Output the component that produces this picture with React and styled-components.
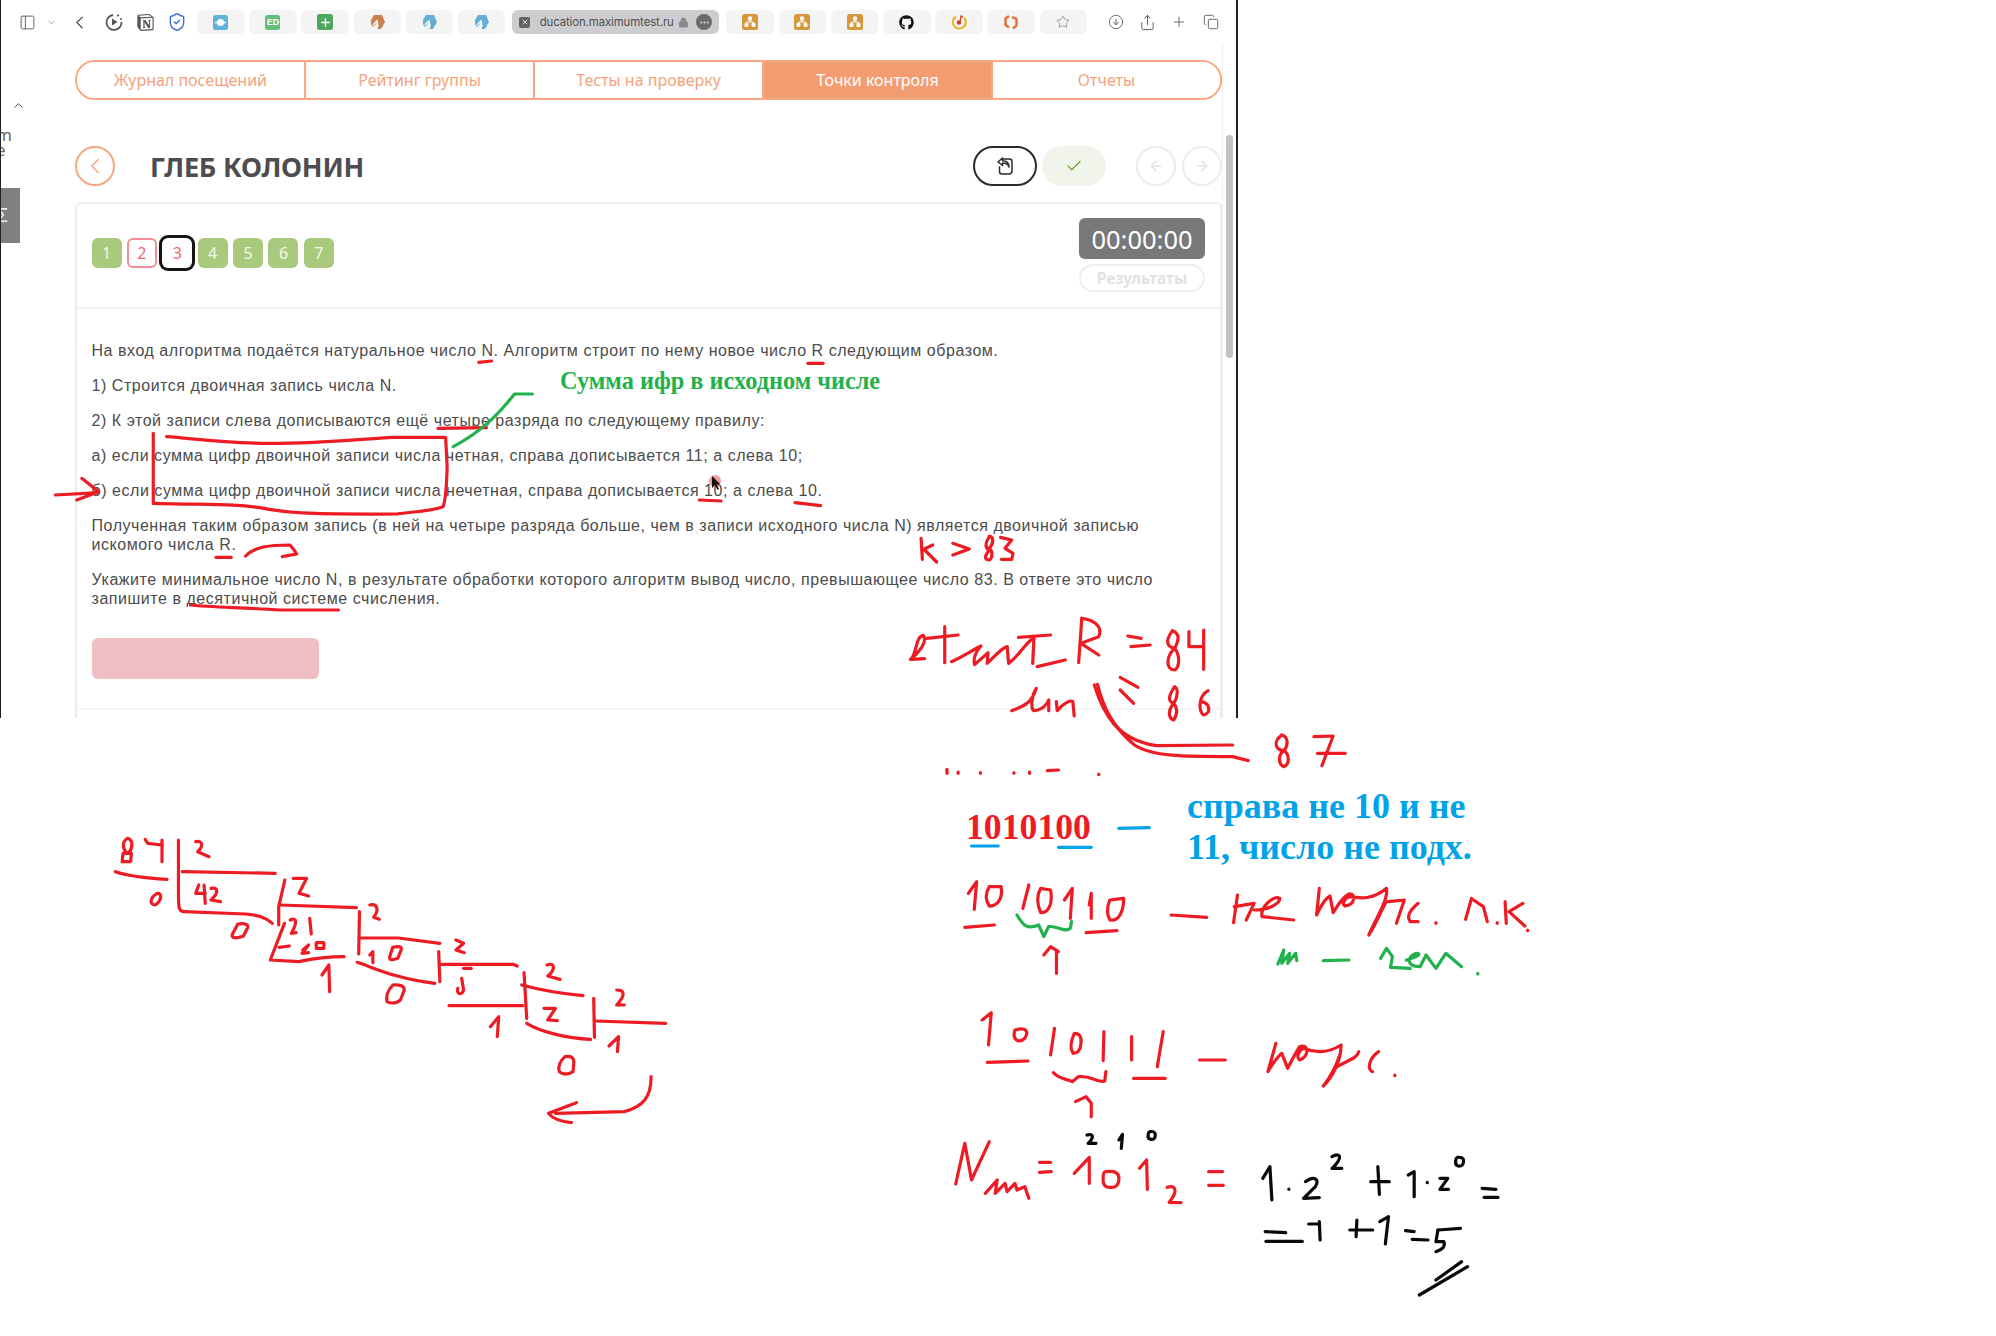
import React from "react";
import styled, { createGlobalStyle } from "styled-components";
import { PanelLeft, ChevronDown, ChevronLeft, ChevronUp, ShieldCheck, Lock, Ellipsis, X, Star, CircleArrowDown, Share, Plus, Copy, ArrowLeft, ArrowRight, Check } from "lucide-react";
import { FaGithub } from "react-icons/fa";
import { SiNotion } from "react-icons/si";

const Global = createGlobalStyle`
  html, body { margin: 0; padding: 0; background: #fff; }
  body { font-family: "Liberation Sans", Arial, sans-serif; }
  * { box-sizing: border-box; }
`;

const Page = styled.div`
  position: relative;
  width: 1996px;
  height: 1336px;
  background: #fff;
  overflow: hidden;
`;
const Win = styled.div`
  width: 1238px;
  height: 718px;
  border-left: 1px solid #222;
  border-right: 2px solid #222;
  display: flex;
  flex-direction: column;
  overflow: hidden;
  background: #fff;
`;
const Toolbar = styled.div`
  height: 45px;
  flex: none;
  display: flex;
  align-items: flex-start;
  padding: 10px 0 0 13px;
`;
const Slot = styled.span`
  width: ${(p) => p.$w}px;
  height: 24px;
  flex: none;
  display: flex;
  align-items: center;
  justify-content: center;
  color: ${(p) => p.$c || "#666"};
`;
const TabGroup = styled.div`
  display: flex;
  gap: 4.7px;
  margin-left: ${(p) => p.$ml || 0}px;
`;
const MiniTab = styled.div`
  width: 47.5px;
  height: 24px;
  border-radius: 6px;
  background: #f4f4f5;
  display: flex;
  align-items: center;
  justify-content: center;
`;
const Address = styled.div`
  width: 207px;
  height: 24px;
  margin-left: 7px;
  border-radius: 6px;
  background: #cdcdcf;
  display: flex;
  align-items: center;
  padding: 0 7px 0 7px;
  font-family: Inter, sans-serif;
  font-size: 11.4px;
  letter-spacing: -0.1px;
  color: #4e4e50;
  white-space: nowrap;
`;
const CloseBox = styled.span`
  width: 11px;
  height: 11px;
  border-radius: 2px;
  background: #636365;
  color: #ddd;
  display: flex;
  align-items: center;
  justify-content: center;
  margin-right: 6px;
`;
const FaintE = styled.span`
  color: #bdbdbf;
`;
const MoreDot = styled.span`
  width: 16px;
  height: 16px;
  border-radius: 50%;
  background: #6b6b6d;
  color: #ddd;
  display: flex;
  align-items: center;
  justify-content: center;
  margin-left: auto;
`;
const RightIcons = styled.div`
  display: flex;
  margin-left: 13px;
`;

const Fav = styled.span`
  width: ${(p) => p.$s || 15}px;
  height: ${(p) => p.$s || 15}px;
  background: ${(p) => p.$bg};
  border-radius: 2.5px;
  color: #fff;
  display: flex;
  align-items: center;
  justify-content: center;
  font: 700 9px "Liberation Sans", sans-serif;
`;

const Body = styled.div`
  flex: 1;
  display: flex;
  min-height: 0;
`;
const Rail = styled.div`
  width: 74px;
  flex: none;
  display: flex;
  flex-direction: column;
  overflow: hidden;
  color: #555;
`;
const RailChevron = styled.span`
  margin: 53px 0 0 10px;
  height: 14px;
  display: flex;
`;
const RailText = styled.div`
  margin: 15px 0 0 -5px;
  font: 400 17px/15px "Noto Sans", sans-serif;
  color: #666;
`;
const RailBlock = styled.div`
  margin-top: 31px;
  width: 19px;
  height: 55px;
  background: #808080;
  color: #eee;
  font: 400 19px/55px "Noto Sans", sans-serif;
  overflow: hidden;
  padding-left: 0;
  text-indent: -4px;
`;
const Main = styled.main`
  width: 1147px;
  flex: none;
  padding-top: 15px;
`;
const Nav = styled.nav`
  display: flex;
  height: 40px;
  border: 2px solid #f5a882;
  border-radius: 20px;
  overflow: hidden;
`;
const NavTab = styled.div`
  flex: 1;
  display: flex;
  align-items: center;
  justify-content: center;
  font: 400 16px "Noto Sans", sans-serif;
  color: ${(p) => (p.$active ? "#fff" : "#f4a27c")};
  background: ${(p) => (p.$active ? "#f39c72" : "#fff")};
  border-left: ${(p) => (p.$first ? "none" : "2px solid #f5a882")};
`;
const TitleRow = styled.div`
  margin-top: 46px;
  height: 40px;
  display: flex;
  align-items: center;
`;
const Back = styled.div`
  width: 40px;
  height: 40px;
  border-radius: 50%;
  border: 2px solid #f5a882;
  color: #f4a27c;
  display: flex;
  align-items: center;
  justify-content: center;
`;
const Name = styled.h1`
  margin: 0 0 0 35px;
  font: 700 27px "Noto Sans", sans-serif;
  letter-spacing: -0.2px;
  color: #4d4d4f;
`;
const Actions = styled.div`
  margin-left: auto;
  display: flex;
  align-items: center;
`;
const Pill = styled.div`
  width: 64px;
  height: 40px;
  border-radius: 20px;
  display: flex;
  align-items: center;
  justify-content: center;
  margin-left: ${(p) => p.$ml || 0}px;
  border: ${(p) => (p.$dark ? "2px solid #2b2b2b" : "none")};
  background: ${(p) => (p.$dark ? "#fff" : "#f1f4ea")};
  color: ${(p) => (p.$dark ? "#2b2b2b" : "#7aa23c")};
`;
const Circle = styled.div`
  width: 40px;
  height: 40px;
  border-radius: 50%;
  border: 2px solid #ececec;
  color: #e2e2e2;
  display: flex;
  align-items: center;
  justify-content: center;
  margin-left: ${(p) => p.$ml}px;
`;
const Card = styled.section`
  margin-top: 16px;
  border: 2px solid #ececec;
  border-bottom: none;
  border-radius: 6px 6px 0 0;
  height: 520px;
`;
const CardHead = styled.div`
  height: 105px;
  border-bottom: 2px solid #f3f3f3;
  display: flex;
  justify-content: space-between;
  padding: 14px 15px 0 14.5px;
`;
const Steps = styled.div`
  display: flex;
  gap: 5.4px;
  margin-top: 20px;
`;
const Step = styled.div`
  width: 30px;
  height: 30px;
  border-radius: 6px;
  display: flex;
  align-items: center;
  justify-content: center;
  font: 400 16px "Noto Sans", sans-serif;
  background: ${(p) => (p.$state === "ok" ? "#a9ca7c" : "#fff")};
  color: ${(p) => (p.$state === "ok" ? "#f2f7e8" : "#ef6672")};
  border: ${(p) => (p.$state === "bad" ? "2px solid #f08d96" : "none")};
  box-shadow: ${(p) => (p.$state === "cur" ? "0 0 0 3px #151515" : "none")};
`;
const TimerCol = styled.div`
  width: 126px;
  display: flex;
  flex-direction: column;
  gap: 5px;
`;
const Timer = styled.div`
  height: 41px;
  border-radius: 6px;
  background: #78787a;
  color: #fff;
  display: flex;
  align-items: center;
  justify-content: center;
  font: 400 25.5px "Noto Sans", sans-serif;
`;
const Results = styled.div`
  height: 28px;
  border-radius: 14px;
  border: 2px solid #eeeeee;
  color: #e2e2e2;
  display: flex;
  align-items: center;
  justify-content: center;
  font: 700 15.5px "Noto Sans", sans-serif;
`;
const Task = styled.div`
  padding: 31.5px 14.5px 0;
  font: 400 16px/19px "Liberation Sans", sans-serif;
  letter-spacing: 0.54px;
  color: #4c4c4c;
`;
const Para = styled.p`
  margin: 0 0 16px;
  white-space: nowrap;
`;
const Answer = styled.div`
  margin-top: 30px;
  width: 227px;
  height: 41px;
  border-radius: 6px;
  background: #efbfc3;
`;
const CardFoot = styled.div`
  margin: 29px -14.5px 0;
  border-top: 2px solid #f5f5f5;
`;
const Scroll = styled.div`
  width: 14px;
  flex: none;
  border-left: 1px solid #eeeeee;
  padding: 90px 2px 0 3px;
`;
const Thumb = styled.div`
  width: 7px;
  height: 223px;
  border-radius: 4px;
  background: #c2c2c2;
`;
const Overlay = styled.svg`
  position: absolute;
  left: 0;
  top: 0;
  width: 1996px;
  height: 1336px;
  pointer-events: none;
  path, circle {
    vector-effect: non-scaling-stroke;
  }
`;
const Note = styled.div`
  position: absolute;
  left: ${(p) => p.$x}px;
  top: ${(p) => p.$y}px;
  font-family: "Liberation Serif", "Times New Roman", serif;
  font-weight: 700;
  font-size: ${(p) => p.$size}px;
  line-height: ${(p) => p.$lh}px;
  color: ${(p) => p.$color};
  white-space: nowrap;
`;

const RED = "#ed1c24", GREEN = "#22b14c", BLUE = "#00a2e8", BLACK = "#0a0a0a";

function Ink({ ox, oy, sx, color, w = 3.2, d }) {
  return (
    <g transform={`translate(${ox} ${oy}) scale(${1 / sx} ${1 / 3})`} fill="none" stroke={color} strokeWidth={w} strokeLinecap="round" strokeLinejoin="round">
      {d.map((p, i) => <path key={i} d={p} />)}
    </g>
  );
}

const Z3 = { ox: 40, oy: 200, sx: 1.96 };
const Z4 = { ox: 40, oy: 500, sx: 1.742 };
const Z5 = { ox: 880, oy: 500, sx: 2.24 };
const Z6 = { ox: 100, oy: 810, sx: 2.613 };
const Z7 = { ox: 930, oy: 870, sx: 2.53 };
const Z8 = { ox: 930, oy: 1100, sx: 2.53 };

const inkZ3 = [
  "M860,487 L885,483", "M1505,490 L1535,490", "M780,685 L875,683",
  "M222,700 L222,905",
  "M248,710 C300,715 350,730 450,730 C550,730 650,715 690,712 L795,712 L798,800 C797,860 795,900 790,920 C760,935 730,935 700,942 C600,942 500,945 440,925 C380,910 330,915 222,910",
  "M30,885 L115,878", "M82,835 L115,875 L72,900",
  "M1292,900 L1335,903", "M1480,908 L1530,917", "M345,1072 L375,1072",
  "M403,1068 C420,1040 450,1035 490,1035 L498,1050 L503,1062 L475,1070",
];
const inkZ5 = [
  "M92,115 L95,178", "M118,135 L95,150", "M100,150 L127,186", "M163,130 L200,147 L163,165",
  "M245,110 C235,130 235,145 245,150 C235,165 232,180 245,180 C255,170 250,150 245,145 C255,130 255,110 245,108",
  "M270,112 L295,120 L280,145 L298,160 L295,178 L272,178",
  "M68,478 C85,462 108,425 97,406 C80,410 84,450 70,478 L100,476",
  "M145,380 L145,488", "M105,415 L175,405",
  "M160,485 C185,470 205,452 226,438 C215,455 208,475 212,494 L242,458 L240,490 C258,470 270,445 285,440 L288,490 C310,470 325,430 345,412 L342,490", "M310,412 L382,405",
  "M352,500 L415,480",
  "M452,355 L445,488", "M452,355 C480,360 500,380 490,410 L450,430 L490,465",
  "M555,408 L585,415", "M562,440 L605,435",
  "M655,392 C640,420 640,440 660,445 C640,470 640,510 660,510 C672,500 672,465 660,445 C670,420 672,400 655,392",
  "M692,395 L692,440 L725,440", "M725,390 L725,508",
  "M295,632 C320,620 340,610 350,565 C338,590 338,630 345,632 C365,630 375,610 378,600 L378,632 M395,605 L397,632 C410,610 425,600 432,605 L435,648",
  "M480,555 C500,640 530,720 620,737 L790,735",
  "M487,553 C500,620 520,680 570,735 C610,770 680,770 790,770 L825,782",
  "M538,532 L578,562", "M538,570 L568,610",
  "M660,560 C645,590 645,605 658,610 C645,630 645,655 658,660 C668,640 665,620 658,610 C668,590 668,565 660,560",
  "M735,572 C710,590 715,640 725,645 C742,640 740,610 720,605",
  "M900,705 C880,725 885,750 905,752 C915,735 915,710 900,705", "M905,752 C890,765 893,795 905,800 C920,790 915,760 905,752",
  "M972,710 L1015,708 L990,797", "M980,760 L1042,760",
  "M150,808 L150,820", "M175,816 L175,820", "M225,818 L225,820", "M300,818 L300,820", "M335,816 L335,820", "M375,812 L400,810", "M490,822 L490,824",
];
const inkZ6 = [
  "M72,85 C55,95 60,125 75,130 C85,115 88,90 72,85", "M75,130 L60,130 L58,155 L80,155 L82,130",
  "M118,88 L125,100 L162,105", "M162,90 L162,155",
  "M205,90 L205,245", "M40,185 C80,200 130,205 175,208", "M215,185 L458,190",
  "M250,95 C270,90 270,110 255,125 L285,140",
  "M258,225 L250,250 L275,250", "M272,225 L275,280", "M290,235 C310,230 310,250 290,270 L315,275",
  "M150,250 C130,262 128,285 145,285 C162,270 162,248 150,250",
  "M205,250 C205,290 205,305 220,305 L380,312 C410,315 430,320 450,340",
  "M360,342 Q388,338 386,352 L375,378 Q345,390 345,375 Z",
  "M483,210 L467,290 L467,345", "M470,285 L670,293",
  "M505,205 L540,205 L520,250 L545,258",
  "M497,330 C515,320 515,340 500,370 L512,368", "M548,325 L552,372",
  "M482,340 L445,450 L520,455 C560,445 600,440 638,440", "M468,412 L495,408",
  "M530,420 L545,405 L528,430 L545,428", "M565,398 L585,398 L585,415 L565,415 Z",
  "M580,495 L598,465 L600,545",
  "M678,305 L676,432", "M680,384 L780,384 L888,400", "M705,285 C725,280 730,300 715,322 L730,328",
  "M705,435 L713,425 L713,458", "M765,412 Q790,405 787,420 L778,445 Q755,455 757,440 Z",
  "M672,457 C720,475 770,505 875,520", "M765,525 Q795,522 795,540 L785,570 Q770,585 750,575 Q745,550 765,525 Z",
  "M885,425 L888,515", "M890,463 L1080,463 L1090,468", "M930,390 L950,400 L930,420 L952,428",
  "M950,475 L970,475", "M945,505 L950,540 C945,560 930,550 935,535",
  "M912,587 L1105,587", "M1020,650 L1042,620 L1038,680",
  "M1108,488 L1115,625", "M1102,525 C1150,540 1200,550 1262,557", "M1168,465 C1190,455 1190,480 1170,498 L1202,508",
  "M1160,595 L1190,595 L1170,630 L1195,632",
  "M1115,640 C1150,665 1220,685 1282,688",
  "M1290,565 L1292,682", "M1295,633 L1478,640", "M1350,540 C1375,540 1370,560 1350,585 L1370,585",
  "M1330,708 L1355,680 L1352,725", "M1215,740 Q1240,735 1238,760 L1236,785 Q1215,800 1200,785 Q1195,760 1215,740 Z",
  "M1440,800 C1440,860 1420,890 1370,905 L1190,910", "M1245,878 L1172,910 C1185,930 1210,935 1232,938",
];
const inkZ7 = [
  "M97,70 L118,35 L112,118", "M150,50 L180,50 C185,85 170,110 150,108 C140,90 140,70 150,50 Z", "M88,172 L163,165",
  "M235,115 L250,45", "M280,55 L305,60 C310,90 305,130 280,128 C270,100 270,75 280,55 Z", "M340,90 L360,55 L355,145",
  "M403,105 L408,70 L408,145", "M455,90 L490,85 C490,120 480,155 455,150 C445,130 450,105 455,90 Z", "M395,188 L473,182",
  "M288,255 L305,230 L325,245", "M320,245 L320,310",
  "M610,135 L700,142",
  "M778,75 L768,158", "M770,110 L820,100 L800,150", "M820,120 C860,120 885,100 885,85 C870,75 835,110 840,140 L920,150",
  "M985,55 L978,135 C990,105 1000,85 1012,78 L1020,128 C1030,110 1040,85 1060,72 C1080,70 1075,105 1050,108 C1040,100 1050,85 1060,80 C1090,85 1120,90 1155,55 C1160,90 1130,140 1110,195 C1130,160 1145,110 1155,95",
  "M1160,95 L1200,90 L1180,160", "M1235,100 C1215,120 1205,140 1215,155 L1235,155",
  "M1280,158 L1280,160",
  "M1370,85 L1355,148", "M1375,90 L1400,110 L1410,155", "M1435,158 L1435,160", "M1455,95 L1458,160", "M1500,100 L1465,125 L1505,168", "M1512,180 L1512,182",
  "M132,450 L155,428 L148,525", "M215,480 Q245,470 245,490 Q240,515 222,512 Q208,505 215,480 Z", "M145,577 L248,573",
  "M315,475 L305,555", "M365,490 Q385,490 382,520 Q380,550 362,550 Q350,530 365,490 Z", "M440,485 L438,572", "M510,500 L510,570", "M590,485 L575,590", "M515,625 L595,625",
  "M312,608 C330,630 345,625 360,635 L375,620 C410,615 420,640 442,633 L445,605",
  "M368,695 L395,680 L408,700 L408,740",
  "M682,570 L747,570",
  "M875,520 L855,605 C870,575 885,555 890,550 L905,595 C915,570 925,550 935,530 C960,520 960,560 935,570 C925,560 935,540 945,535 C985,555 1020,540 1040,525 C1040,570 1020,620 995,648 C1015,620 1030,580 1035,560",
  "M1030,590 C1060,570 1080,565 1085,545", "M1135,545 C1110,565 1105,600 1120,605", "M1176,615 L1176,617",
];
const inkZ7Green = [
  "M220,135 C235,165 245,180 275,165 L288,200 L300,170 C320,165 340,190 355,175 L358,155",
  "M880,282 L895,240 L890,280 L910,250 L905,280 L925,250 L928,272", "M995,272 L1060,270",
  "M1140,265 L1155,235 L1170,260 L1165,292 L1215,295", "M1205,270 C1235,260 1245,250 1230,250 C1205,260 1205,290 1240,290 L1255,255 L1280,295 L1305,250 L1345,290",
  "M1386,310 L1386,312",
];
const inkZ8Red = [
  "M65,252 L88,130 L105,240 L150,125",
  "M140,280 L170,240 L165,280 L190,250 L195,275 L215,250 L220,270 L240,260 L250,295",
  "M277,187 L305,187", "M277,217 L307,215",
  "M365,220 L403,172 L403,250", "M445,215 Q478,210 478,235 Q478,265 455,262 Q436,262 438,235 Q438,215 445,215 Z", "M530,205 L548,180 L550,268",
  "M600,262 C620,255 630,270 605,307 L635,308",
  "M705,215 L740,215", "M705,256 L742,256",
];
const inkZ8Black = [
  "M397,105 C415,100 415,112 400,130 L420,130", "M478,120 L487,103 L484,145", "M556,95 Q570,92 570,105 Q570,120 558,118 Q550,115 552,105 Q552,97 556,95 Z",
  "M842,235 L860,200 L865,300", "M908,267 L908,268", "M950,245 C975,225 985,240 975,260 L945,295 L985,293",
  "M1017,170 C1040,155 1045,175 1017,205 L1042,205",
  "M1133,200 L1137,283", "M1115,245 L1162,245",
  "M1210,225 L1225,215 L1225,290", "M1258,247 L1258,248", "M1290,235 L1310,235 L1290,268 L1312,268",
  "M1334,172 Q1350,170 1350,183 Q1350,200 1336,198 Q1328,195 1330,183 Q1330,175 1334,172 Z",
  "M1397,265 L1432,268", "M1402,292 L1437,292",
  "M848,395 L900,398", "M850,424 L942,424",
  "M958,372 L985,372", "M985,365 L987,420",
  "M1080,360 L1078,410", "M1062,390 L1120,390",
  "M1138,365 L1160,350 L1152,432",
  "M1203,392 L1225,395", "M1220,418 L1260,420",
  "M1285,390 L1342,385", "M1285,390 L1280,425 L1300,425 C1305,440 1295,450 1280,455",
  "M1238,585 L1360,500", "M1280,540 L1345,485",
];

const TreeIcon = () => (
  <Fav $bg="#d8973a" $s={16}>
    <svg width="12" height="12" viewBox="0 0 12 12" fill="#fff"><rect x="4" y="0.5" width="4" height="4" rx="1" /><rect x="0.5" y="7" width="4" height="4" rx="1" /><rect x="7.5" y="7" width="4" height="4" rx="1" /><path d="M6 4v2M2.5 7V6h7v1" stroke="#fff" fill="none" /></svg>
  </Fav>
);
const BirdIcon = ({ c }) => (
  <svg width="15" height="16" viewBox="0 0 15 16"><path d="M4 1 L12 1 L15 8 L11 15 L8 15 L7 9 L3 13 L1 10 L1 6 Z" fill={c} /><path d="M3 11 L7 7 L8 13" stroke="#fff" strokeWidth="1.4" fill="none" /></svg>
);
const PlayClock = () => (
  <svg width="20" height="20" viewBox="0 0 20 20" fill="none" stroke="#555" strokeWidth="1.8"><path d="M9 3 A7.5 7.5 0 1 0 17.5 10" /><circle cx="14" cy="3.5" r="1.1" fill="#555" stroke="none" /><circle cx="17" cy="7" r="1" fill="#555" stroke="none" /><path d="M8 6.5 L13.5 10 L8 13.5 Z" fill="#555" stroke="none" /></svg>
);
const UndoSquare = () => (
  <svg width="20" height="20" viewBox="0 0 20 20" fill="none" stroke="#2b2b2b" strokeWidth="1.5" strokeLinejoin="round" strokeLinecap="round"><path d="M7 3 H14.5 A2.5 2.5 0 0 1 17 5.5 V15 A3 3 0 0 1 14 18 H7 A2.5 2.5 0 0 1 4.5 15.5 V11" /><path d="M7.5 2 L3 6 L7.5 9.5 V7 C11 7 13 8 14 11 C14 7 12 4.7 7.5 4.7 Z" fill="#fff" /></svg>
);
const RecordIcon = () => (
  <svg width="16" height="16" viewBox="0 0 16 16" fill="none"><path d="M5 2.5 A6.5 6.5 0 1 0 13 3.5" stroke="#eab92e" strokeWidth="2.2" /><circle cx="8" cy="8.5" r="2.3" fill="#d9402c" /><path d="M9 8 L10 2 L12 3" stroke="#d9402c" strokeWidth="1.4" /></svg>
);
const HexIcon = () => (
  <svg width="14" height="16" viewBox="0 0 14 16" fill="none" stroke="#e0702b" strokeWidth="2.4"><path d="M5 2 L1.5 4.5 V11 L5 13.5" /><path d="M8 3 L12.5 5 V11.5 L9 14.5" /></svg>
);

const NAV = ["Журнал посещений", "Рейтинг группы", "Тесты на проверку", "Точки контроля", "Отчеты"];
const STEPS = ["ok", "bad", "cur", "ok", "ok", "ok", "ok"];

export default function App() {
  return (
    <Page>
      <Global />
      <Win>
        <Toolbar>
          <Slot $w={26}><PanelLeft size={17} strokeWidth={1.4} color="#666" /></Slot>
          <Slot $w={23}><ChevronDown size={11} color="#999" /></Slot>
          <Slot $w={32}><ChevronLeft size={21} strokeWidth={1.5} color="#555" /></Slot>
          <Slot $w={38}><PlayClock /></Slot>
          <Slot $w={24}><SiNotion size={17} color="#555" /></Slot>
          <Slot $w={40}><ShieldCheck size={20} strokeWidth={1.7} color="#3f6fe0" /></Slot>
          <TabGroup>
            <MiniTab><Fav $bg="#62b2d8"><svg width="11" height="9" viewBox="0 0 11 9" fill="#fff"><circle cx="5.5" cy="4.5" r="3.5" /><circle cx="1" cy="4.5" r="1" /><circle cx="10" cy="4.5" r="1" /></svg></Fav></MiniTab>
            <MiniTab><Fav $bg="#5fc07c">ED</Fav></MiniTab>
            <MiniTab><Fav $bg="#4ea75c" $s={16}><Plus size={13} strokeWidth={2.6} /></Fav></MiniTab>
            <MiniTab><BirdIcon c="#c98350" /></MiniTab>
            <MiniTab><BirdIcon c="#66aed6" /></MiniTab>
            <MiniTab><BirdIcon c="#66aed6" /></MiniTab>
          </TabGroup>
          <Address>
            <CloseBox><X size={8} strokeWidth={3} /></CloseBox>
            <FaintE>:</FaintE>ducation.maximumtest.ru
            <Lock size={11} fill="#8a8a8c" color="#8a8a8c" style={{ marginLeft: 4 }} />
            <MoreDot><Ellipsis size={11} strokeWidth={2.6} /></MoreDot>
          </Address>
          <TabGroup $ml={7}>
            <MiniTab><TreeIcon /></MiniTab>
            <MiniTab><TreeIcon /></MiniTab>
            <MiniTab><TreeIcon /></MiniTab>
            <MiniTab><FaGithub size={15} color="#111" /></MiniTab>
            <MiniTab><RecordIcon /></MiniTab>
            <MiniTab><HexIcon /></MiniTab>
            <MiniTab><Star size={14} strokeWidth={1.4} color="#888" /></MiniTab>
          </TabGroup>
          <RightIcons>
            <Slot $w={32}><CircleArrowDown size={16} strokeWidth={1.3} color="#555" /></Slot>
            <Slot $w={31}><Share size={17} strokeWidth={1.3} color="#555" /></Slot>
            <Slot $w={32}><Plus size={16} strokeWidth={1.3} color="#555" /></Slot>
            <Slot $w={32}><Copy size={16} strokeWidth={1.3} color="#555" /></Slot>
          </RightIcons>
        </Toolbar>
        <Body>
          <Rail>
            <RailChevron><ChevronUp size={15} strokeWidth={1.6} /></RailChevron>
            <RailText>m<br />e</RailText>
            <RailBlock>Σ</RailBlock>
          </Rail>
          <Main>
            <Nav>
              {NAV.map((t, i) => <NavTab key={t} $first={i === 0} $active={i === 3}>{t}</NavTab>)}
            </Nav>
            <TitleRow>
              <Back><ChevronLeft size={26} strokeWidth={1.3} /></Back>
              <Name>ГЛЕБ КОЛОНИН</Name>
              <Actions>
                <Pill $dark><UndoSquare /></Pill>
                <Pill $ml={5}><Check size={18} strokeWidth={1.8} /></Pill>
                <Circle $ml={30}><ArrowLeft size={16} strokeWidth={2.2} /></Circle>
                <Circle $ml={6}><ArrowRight size={16} strokeWidth={2.2} /></Circle>
              </Actions>
            </TitleRow>
            <Card>
              <CardHead>
                <Steps>
                  {STEPS.map((s, i) => <Step key={i} $state={s}>{i + 1}</Step>)}
                </Steps>
                <TimerCol>
                  <Timer>00:00:00</Timer>
                  <Results>Результаты</Results>
                </TimerCol>
              </CardHead>
              <Task>
                <Para>На вход алгоритма подаётся натуральное число N. Алгоритм строит по нему новое число R следующим образом.</Para>
                <Para>1) Строится двоичная запись числа N.</Para>
                <Para>2) К этой записи слева дописываются ещё четыре разряда по следующему правилу:</Para>
                <Para>а) если сумма цифр двоичной записи числа четная, справа дописывается 11; а слева 10;</Para>
                <Para>б) если сумма цифр двоичной записи числа нечетная, справа дописывается 10; а слева 10.</Para>
                <Para>Полученная таким образом запись (в ней на четыре разряда больше, чем в записи исходного числа N) является двоичной записью<br />искомого числа R.</Para>
                <Para>Укажите минимальное число N, в результате обработки которого алгоритм вывод число, превышающее число 83. В ответе это число<br />запишите в десятичной системе счисления.</Para>
                <Answer />
                <CardFoot />
              </Task>
            </Card>
          </Main>
          <Scroll><Thumb /></Scroll>
        </Body>
      </Win>

      <Note $x={560} $y={366} $size={24.3} $lh={30} $color={GREEN}>Сумма ифр в исходном числе</Note>
      <Note $x={966} $y={807} $size={35.7} $lh={40} $color={RED}>1010100</Note>
      <Note $x={1187} $y={786} $size={36} $lh={40.5} $color={BLUE}>справа не 10 и не<br />11, число не подх.</Note>

      <Overlay viewBox="0 0 1996 1336">
        <Ink {...Z3} color={RED} d={inkZ3} />
        <Ink {...Z3} color={GREEN} d={["M965,582 L930,582 C900,640 870,690 810,740"]} />
        <circle cx="715" cy="481" r="6" fill="#ed1c24" opacity="0.45" />
        <path d="M712,476 L712,488 L715,485 L717.5,490 L719,489 L716.5,484 L720,484 Z" fill="#111" />
        <Ink {...Z4} color={RED} d={["M262,315 C300,322 350,322 420,330 L520,330"]} />
        <Ink {...Z5} color={RED} d={inkZ5} />
        <Ink {...Z5} color={BLUE} d={["M205,1038 L265,1038", "M400,1042 L473,1042", "M535,985 L603,983"]} />
        <Ink {...Z6} color={RED} d={inkZ6} />
        <Ink {...Z7} color={RED} d={inkZ7} />
        <Ink {...Z7} color={GREEN} d={inkZ7Green} />
        <Ink {...Z8} color={RED} d={inkZ8Red} />
        <Ink {...Z8} color={BLACK} d={inkZ8Black} />
      </Overlay>
    </Page>
  );
}
